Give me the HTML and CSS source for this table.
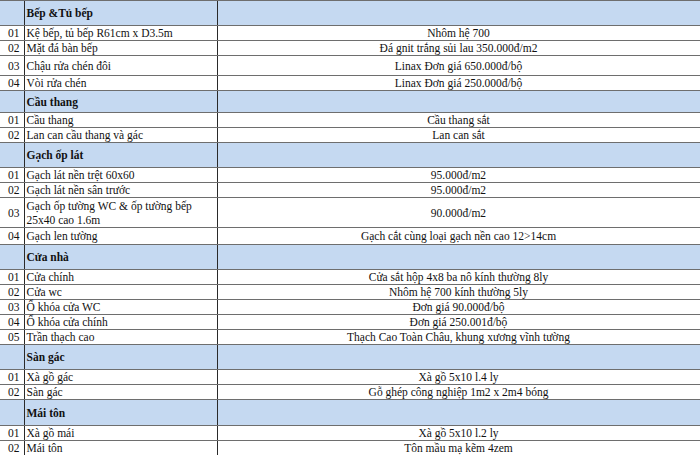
FILE: index.html
```html
<!DOCTYPE html>
<html lang="vi">
<head>
<meta charset="utf-8">
<title>Vật tư</title>
<link rel="stylesheet" href="styles.css">
</head>
<body>
<table class="sheet">
<colgroup><col class="c-no"><col class="c-name"><col class="c-val"></colgroup>
<tbody>
<tr class="top"><td></td><td></td><td></td></tr>
<tr class="sec h25"><td></td><td class="name">Bếp &amp;Tủ bếp</td><td></td></tr>
<tr class="r15"><td class="no">01</td><td class="name">Kệ bếp, tủ bếp R61cm x D3.5m</td><td class="val">Nhôm hệ 700</td></tr>
<tr class="r15"><td class="no">02</td><td class="name">Mặt đá bàn bếp</td><td class="val">Đá gnit trắng sủi lau 350.000đ/m2</td></tr>
<tr class="r20"><td class="no">03</td><td class="name">Chậu rửa chén đôi</td><td class="val">Linax Đơn giá 650.000đ/bộ</td></tr>
<tr class="r15"><td class="no">04</td><td class="name">Vòi rửa chén</td><td class="val">Linax Đơn giá 250.000đ/bộ</td></tr>
<tr class="sec h22"><td></td><td class="name">Cầu thang</td><td></td></tr>
<tr class="r15"><td class="no">01</td><td class="name">Cầu thang</td><td class="val">Cầu thang sắt</td></tr>
<tr class="r15"><td class="no">02</td><td class="name">Lan can cầu thang và gác</td><td class="val">Lan can sắt</td></tr>
<tr class="sec h25"><td></td><td class="name">Gạch ốp lát</td><td></td></tr>
<tr class="r14"><td class="no">01</td><td class="name">Gạch lát nền trệt 60x60</td><td class="val">95.000đ/m2</td></tr>
<tr class="r15"><td class="no">02</td><td class="name">Gạch lát nền sân trước</td><td class="val">95.000đ/m2</td></tr>
<tr class="r30"><td class="no">03</td><td class="name">Gạch ốp tường WC &amp; ốp tường bếp<br>25x40 cao 1.6m</td><td class="val">90.000đ/m2</td></tr>
<tr class="r17"><td class="no">04</td><td class="name">Gạch len tường</td><td class="val">Gạch cắt cùng loại gạch nền cao 12&gt;14cm</td></tr>
<tr class="sec h25"><td></td><td class="name">Cửa nhà</td><td></td></tr>
<tr class="r15"><td class="no">01</td><td class="name">Cửa chính</td><td class="val">Cửa sắt hộp 4x8 ba nô kính thường 8ly</td></tr>
<tr class="r15"><td class="no">02</td><td class="name">Cửa wc</td><td class="val">Nhôm hệ 700 kính thường 5ly</td></tr>
<tr class="r15"><td class="no">03</td><td class="name">Ổ khóa cửa WC</td><td class="val">Đơn giá 90.000đ/bộ</td></tr>
<tr class="r15"><td class="no">04</td><td class="name">Ổ khóa cửa chính</td><td class="val">Đơn giá 250.001đ/bộ</td></tr>
<tr class="r15"><td class="no">05</td><td class="name">Trần thạch cao</td><td class="val">Thạch Cao Toàn Châu, khung xương vĩnh tường</td></tr>
<tr class="sec h25"><td></td><td class="name">Sàn gác</td><td></td></tr>
<tr class="r14"><td class="no">01</td><td class="name">Xà gồ gác</td><td class="val">Xà gồ 5x10 l.4 ly</td></tr>
<tr class="r15"><td class="no">02</td><td class="name">Sàn gác</td><td class="val">Gỗ ghép công nghiệp 1m2 x 2m4 bóng</td></tr>
<tr class="sec h26"><td></td><td class="name">Mái tôn</td><td></td></tr>
<tr class="r15"><td class="no">01</td><td class="name">Xà gồ mái</td><td class="val">Xà gồ 5x10 l.2 ly</td></tr>
<tr class="r15"><td class="no">02</td><td class="name">Mái tôn</td><td class="val">Tôn mầu mạ kẽm 4zem</td></tr>
</tbody>
</table>
</body>
</html>
```

FILE: styles.css
```css
html, body {
  margin: 0;
  padding: 0;
  background: #ffffff;
  overflow: hidden;
}
.sheet {
  border-collapse: collapse;
  table-layout: fixed;
  width: 720px;
  font-family: "Liberation Serif", "Times New Roman", serif;
  font-size: 11.5px;
  color: #111111;
}
.c-no { width: 24px; }
.c-name { width: 193px; }
.c-val { width: 503px; }
.sheet td {
  padding: 0;
  line-height: 14px;
  vertical-align: middle;
  border-top: 1px solid #6e6e6e;
  border-bottom: 1px solid #6e6e6e;
  border-left: 1px solid #2a2a2a;
  border-right: 1px solid #2a2a2a;
  white-space: nowrap;
  overflow: visible;
}
.sheet tr td:first-child { border-left: none; }
.sheet .top td { height: 0; border-top: none; }
.no {
  text-align: center;
  padding-left: 4px !important;
}
.name { padding-left: 2px !important; }
.val {
  text-align: center;
  padding-right: 20px !important;
}
.sec td {
  background: #c5d9f1;
  font-weight: bold;
}
.r14 td { height: 13px; }
.r15 td { height: 14px; }
.r17 td { height: 16px; }
.r20 td { height: 19px; }
.r30 td { height: 29px; }
.h22 td { height: 21px; }
.h25 td { height: 24px; }
.h26 td { height: 25px; }
```
